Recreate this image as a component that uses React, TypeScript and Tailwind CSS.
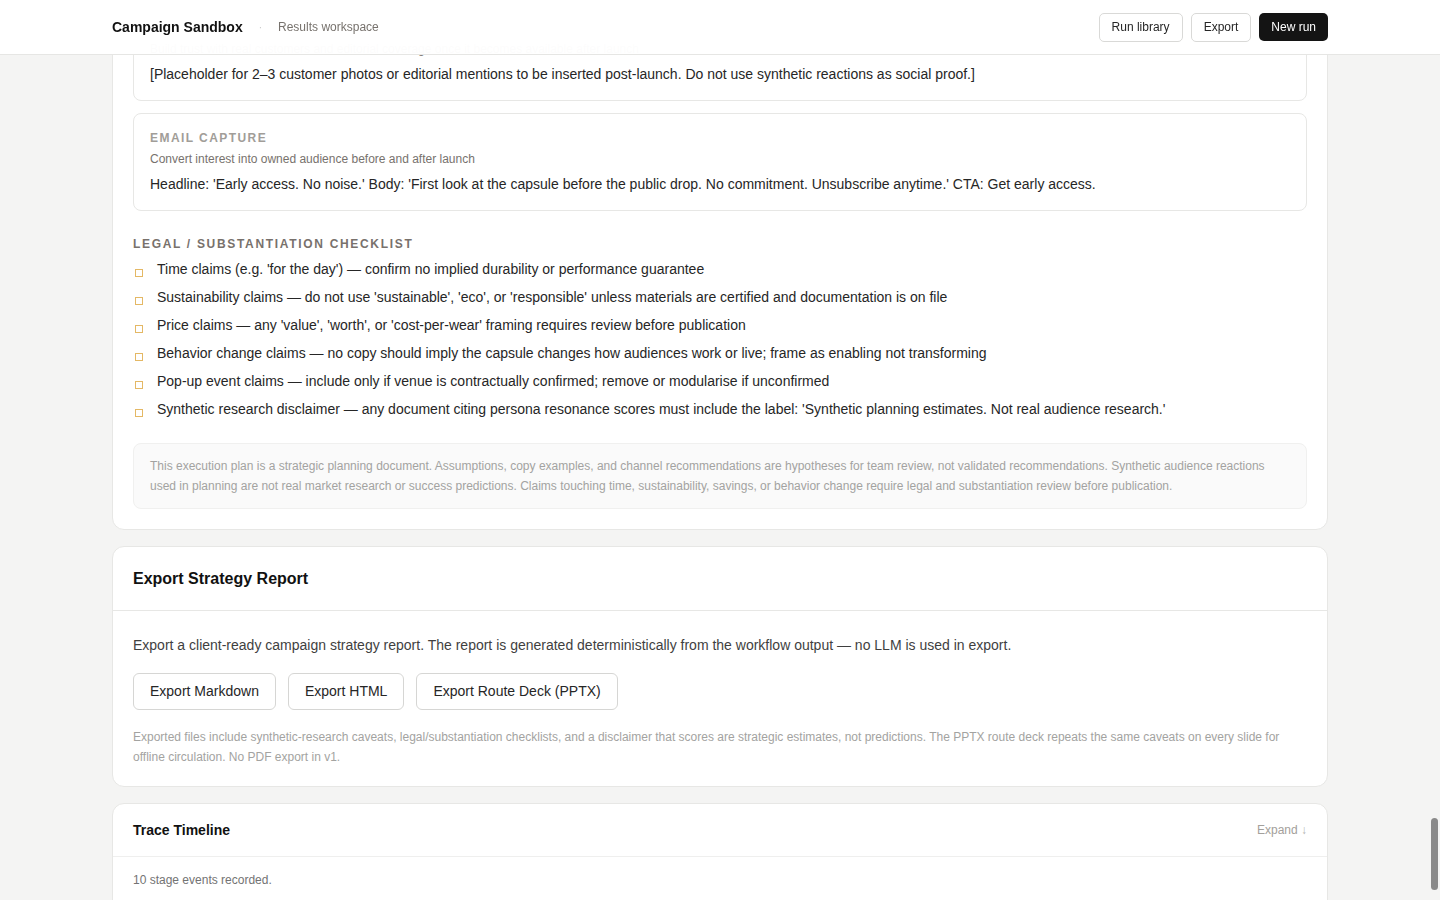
import React from "react";

const checklist = [
  "Time claims (e.g. 'for the day') — confirm no implied durability or performance guarantee",
  "Sustainability claims — do not use 'sustainable', 'eco', or 'responsible' unless materials are certified and documentation is on file",
  "Price claims — any 'value', 'worth', or 'cost-per-wear' framing requires review before publication",
  "Behavior change claims — no copy should imply the capsule changes how audiences work or live; frame as enabling not transforming",
  "Pop-up event claims — include only if venue is contractually confirmed; remove or modularise if unconfirmed",
  "Synthetic research disclaimer — any document citing persona resonance scores must include the label: 'Synthetic planning estimates. Not real audience research.'",
];

function AssetCard({ label, purpose, body }: { label?: string; purpose: string; body: string }) {
  return (
    <div className="rounded-lg border border-[#e7e7e5] bg-white px-4 pt-[17px] pb-[18px]">
      {label ? (
        <div className="mb-[7px] text-[12px] font-bold uppercase leading-[14px] tracking-[0.12em] text-[#a19d98]">{label}</div>
      ) : (
        <div className="h-[21px]" />
      )}
      <div className="text-[12px] leading-[14px] text-[#77726d]">{purpose}</div>
      <div className="mt-[10px] text-[14px] leading-[16px] text-[#262626]">{body}</div>
    </div>
  );
}

function OutlineButton({ children }: { children: React.ReactNode }) {
  return (
    <button className="h-[37px] rounded-md border border-[#d6d6d4] bg-white px-4 text-[14px] text-[#262626]">
      {children}
    </button>
  );
}

export default function App() {
  return (
    <div
      className="relative h-screen overflow-hidden bg-[#f4f4f3]"
      style={{ fontFamily: '"Liberation Sans", Arial, sans-serif' }}
    >
      {/* sticky top bar */}
      <header className="fixed inset-x-0 top-0 z-20 h-[55px] border-b border-[#e6e6e4] bg-white/95 backdrop-blur-xl">
        <div className="mx-auto flex h-full max-w-[1216px] items-center justify-between">
          <div className="flex items-center">
            <span className="text-[14px] font-bold text-[#111]">Campaign Sandbox</span>
            <span className="ml-[16px] text-[10px] text-[#c8c8c8]">·</span>
            <span className="ml-[16px] text-[12px] text-[#77726d]">Results workspace</span>
          </div>
          <div className="flex items-center gap-2">
            <button className="h-[29px] rounded-[5px] border border-[#d9d9d7] bg-white px-3 text-[12px] text-[#262626]">Run library</button>
            <button className="h-[29px] rounded-[5px] border border-[#d9d9d7] bg-white px-3 text-[12px] text-[#262626]">Export</button>
            <button className="h-[28px] rounded-[5px] bg-[#141414] px-3 text-[12px] text-white">New run</button>
          </div>
        </div>
      </header>

      <main className="mx-auto mt-[-18px] flex max-w-[1216px] flex-col gap-4">
        {/* execution plan card (scrolled) */}
        <section className="rounded-b-xl border border-[#e7e7e5] bg-white px-5 pt-5 pb-5">
          <div className="flex flex-col gap-3">
            <AssetCard
              purpose="Build trust with real customers and editorial coverage once it becomes available after launch"
              body="[Placeholder for 2–3 customer photos or editorial mentions to be inserted post-launch. Do not use synthetic reactions as social proof.]"
            />
            <AssetCard
              label="Email capture"
              purpose="Convert interest into owned audience before and after launch"
              body="Headline: 'Early access. No noise.' Body: 'First look at the capsule before the public drop. No commitment. Unsubscribe anytime.' CTA: Get early access."
            />
          </div>

          <div className="mt-[26px] text-[12px] font-bold uppercase leading-[14px] tracking-[0.14em] text-[#78716c]">
            Legal / Substantiation checklist
          </div>
          <ul className="mt-[4px] flex flex-col">
            {checklist.map((item) => (
              <li key={item} className="flex h-[28px] items-center">
                <span className="mt-[8px] ml-[2px] h-[8px] w-[8px] shrink-0 border border-[#e4b865]" />
                <span className="ml-[14px] text-[14px] text-[#262626]">{item}</span>
              </li>
            ))}
          </ul>

          <div className="mt-[20px] rounded-lg border border-[#f0f0ef] bg-[#fafafa] px-4 py-[12px] text-[12px] leading-[20px] text-[#a3a3a1]">
            This execution plan is a strategic planning document. Assumptions, copy examples, and channel recommendations are hypotheses for team review, not validated recommendations. Synthetic audience reactions used in planning are not real market research or success predictions. Claims touching time, sustainability, savings, or behavior change require legal and substantiation review before publication.
          </div>
        </section>

        {/* export card */}
        <section className="rounded-xl border border-[#e7e7e5] bg-white">
          <div className="flex h-[64px] items-center border-b border-[#e7e7e5] px-5">
            <h2 className="text-[16px] font-bold text-[#111]">Export Strategy Report</h2>
          </div>
          <div className="px-5 pt-[26px] pb-[19px]">
            <p className="text-[14px] leading-[16px] text-[#3f3f3f]">
              Export a client-ready campaign strategy report. The report is generated deterministically from the workflow output — no LLM is used in export.
            </p>
            <div className="mt-[20px] flex gap-3">
              <OutlineButton>Export Markdown</OutlineButton>
              <OutlineButton>Export HTML</OutlineButton>
              <OutlineButton>Export Route Deck (PPTX)</OutlineButton>
            </div>
            <p className="mt-[17px] text-[12px] leading-[20px] text-[#a3a3a1]">
              Exported files include synthetic-research caveats, legal/substantiation checklists, and a disclaimer that scores are strategic estimates, not predictions. The PPTX route deck repeats the same caveats on every slide for offline circulation. No PDF export in v1.
            </p>
          </div>
        </section>

        {/* trace timeline card */}
        <section className="rounded-xl border border-[#e7e7e5] bg-white">
          <div className="flex h-[53px] items-center justify-between border-b border-[#efefee] px-5">
            <h2 className="text-[14px] font-bold text-[#111]">Trace Timeline</h2>
            <span className="text-[12px] text-[#a3a09b]">
              Expand <span className="text-[#b5b5b3]">↓</span>
            </span>
          </div>
          <div className="px-5 py-[14px] text-[12px] text-[#737373]">10 stage events recorded.</div>
          <div className="h-[120px]" />
        </section>
      </main>

      {/* overlay scrollbar thumb */}
      <div className="pointer-events-none fixed top-[818px] right-[2px] z-30 h-[72px] w-[7px] rounded-full bg-[#8a8a8a]" />
    </div>
  );
}
